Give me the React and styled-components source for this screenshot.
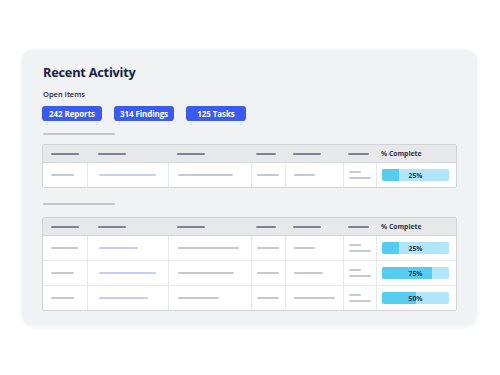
import React from 'react'
import styled, { createGlobalStyle } from 'styled-components'

const GlobalStyle = createGlobalStyle`
  html, body {
    margin: 0;
    padding: 0;
    background: #ffffff;
    font-family: "Open Sans", "Noto Sans", Arial, sans-serif;
  }
`

const Page = styled.div`
  width: 500px;
  height: 375px;
  box-sizing: border-box;
  padding: 50px 23px 0 22px;
`

const Card = styled.div`
  height: 275px;
  box-sizing: border-box;
  background: #f1f2f3;
  border-radius: 10px;
  box-shadow: 0 1px 5px rgba(30, 40, 60, 0.08);
  padding: 14px 20px 0 20px;
`

const Title = styled.h1`
  margin: 0 0 0 1px;
  font-size: 12.8px;
  line-height: 16px;
  font-weight: 700;
  letter-spacing: -0.25px;
  color: #17213f;
`

const Label = styled.div`
  margin: 9px 0 0 1px;
  font-size: 7.5px;
  line-height: 10px;
  font-weight: 600;
  color: #1f2740;
`

const Pills = styled.div`
  display: flex;
  gap: 12px;
  margin-top: 7px;
`

const Pill = styled.div`
  width: 60px;
  height: 15px;
  border-radius: 3px;
  background: #3a5af0;
  color: #ffffff;
  font-size: 8px;
  font-weight: 700;
  letter-spacing: -0.1px;
  display: flex;
  align-items: center;
  justify-content: center;
`

const SectionLine = styled.div`
  width: 72px;
  height: 2px;
  margin: ${(p) => p.$top}px 0 0 1px;
  border-radius: 1px;
  background: #c3c6cc;
`

const Table = styled.div`
  margin-top: ${(p) => p.$top}px;
  border: 1px solid #cfd2d7;
  border-radius: 2px;
  background: #ffffff;
  overflow: hidden;
`

const cols = '44px 81px 83px 34px 58px 33px 1fr'

const HeadRow = styled.div`
  display: grid;
  grid-template-columns: ${cols};
  height: 17px;
  background: #e7e8ea;
  border-bottom: 1px solid #d3d6da;
`

const HeadCell = styled.div`
  display: flex;
  align-items: center;
  padding-left: ${(p) => p.$pad}px;
  font-size: 6.8px;
  font-weight: 700;
  color: #2a3350;
`

const Row = styled.div`
  display: grid;
  grid-template-columns: ${cols};
  height: 24px;
  & + & {
    border-top: 1px solid #e6e8eb;
  }
`

const Cell = styled.div`
  display: flex;
  flex-direction: column;
  justify-content: center;
  gap: 4px;
  padding-left: ${(p) => p.$pad}px;
  & + & {
    border-left: 1px solid #e6e8eb;
  }
`

const Bar = styled.div`
  width: ${(p) => p.$w}px;
  height: 2px;
  border-radius: 1px;
  background: ${(p) => (p.$tone === 'head' ? '#7d8395' : p.$tone === 'link' ? '#c6cdf6' : '#c6c9cf')};
`

const Progress = styled.div`
  position: relative;
  width: 67px;
  height: 12px;
  border-radius: 2px;
  background: #b0e6f8;
  overflow: hidden;
`

const Fill = styled.div`
  position: absolute;
  left: 0;
  top: 0;
  bottom: 0;
  background: #56ccf0;
`

const ProgressText = styled.span`
  position: absolute;
  inset: 0;
  display: flex;
  align-items: center;
  justify-content: center;
  font-size: 6.8px;
  font-weight: 700;
  color: #1c3553;
`

const pads = [8, 11, 9, 5, 8, 5, 5]
const headWidths = [28, 28, 28, 20, 28, 21]

function ActivityTable({ rows, top }) {
  return (
    <Table $top={top}>
      <HeadRow>
        {headWidths.map((w, i) => (
          <HeadCell key={i} $pad={pads[i]}>
            <Bar $w={w} $tone="head" />
          </HeadCell>
        ))}
        <HeadCell $pad={pads[6]}>% Complete</HeadCell>
      </HeadRow>
      {rows.map((r, i) => (
        <Row key={i}>
          <Cell $pad={pads[0]}><Bar $w={r[0]} /></Cell>
          <Cell $pad={pads[1]}><Bar $w={r[1]} $tone="link" /></Cell>
          <Cell $pad={pads[2]}><Bar $w={r[2]} /></Cell>
          <Cell $pad={pads[3]}><Bar $w={22} /></Cell>
          <Cell $pad={pads[4]}><Bar $w={r[3]} /></Cell>
          <Cell $pad={pads[5]}>
            <Bar $w={12} />
            <Bar $w={22} />
          </Cell>
          <Cell $pad={pads[6]}>
            <Progress>
              <Fill style={{ width: `${r[4]}%` }} />
              <ProgressText>{r[4]}%</ProgressText>
            </Progress>
          </Cell>
        </Row>
      ))}
    </Table>
  )
}

export default function App() {
  return (
    <Page>
      <GlobalStyle />
      <Card>
        <Title>Recent Activity</Title>
        <Label>Open Items</Label>
        <Pills>
          <Pill>242 Reports</Pill>
          <Pill>314 Findings</Pill>
          <Pill>125 Tasks</Pill>
        </Pills>
        <SectionLine $top={12} />
        <ActivityTable top={9} rows={[[23, 57, 55, 21, 25]]} />
        <SectionLine $top={15} />
        <ActivityTable
          top={12}
          rows={[
            [27, 39, 61, 21, 25],
            [23, 57, 56, 29, 75],
            [23, 49, 41, 41, 50],
          ]}
        />
      </Card>
    </Page>
  )
}
